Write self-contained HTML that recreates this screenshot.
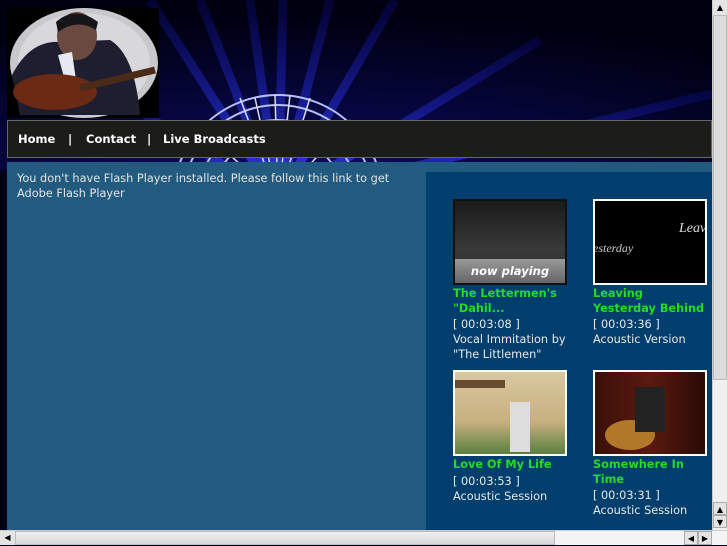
<!DOCTYPE html>
<html><head><meta charset="utf-8"><style>
*{margin:0;padding:0;box-sizing:border-box}
html,body{width:727px;height:545px;overflow:hidden;background:#000018;font-family:"DejaVu Sans","Liberation Sans",sans-serif}
.abs{position:absolute}
#nav{left:7px;top:120px;width:705px;height:38px;background:#1c1c1a;border:1px solid #666;color:#fff;font-weight:bold;font-size:11.5px;line-height:36px}
#nav span{position:absolute;top:0}
#content{left:7px;top:162px;width:705px;height:368px;background:#225a80}
#msg{left:17px;top:171px;width:400px;color:#e4e4e4;font-size:11.3px;line-height:15px}
#panel{left:426px;top:172px;width:286px;height:358px;background:#003f6d}
.item{position:absolute;width:130px;font-size:11.3px;line-height:15px;color:#e8e8e8}
.th{width:114px;height:86px;border:2px solid #fff;margin-bottom:2px;position:relative;overflow:hidden}
.t{color:#22dd22;font-weight:bold;font-size:11.3px;line-height:14.5px;margin-bottom:1px;white-space:nowrap}
</style></head><body>
<svg class="abs" style="left:0;top:0" width="727" height="170">
<defs>
<radialGradient id="bg" cx="0.4" cy="1" r="0.9"><stop offset="0" stop-color="#0a0a60"/><stop offset="1" stop-color="#000010"/></radialGradient>
<linearGradient id="bm" x1="0" y1="1" x2="0" y2="0"><stop offset="0" stop-color="#3a4aff"/><stop offset="1" stop-color="#1010a0" stop-opacity=".3"/></linearGradient>
</defs>
<rect width="727" height="170" fill="url(#bg)"/>
<g stroke="url(#bm)" stroke-width="9" opacity=".85">
<line x1="278" y1="200" x2="60" y2="60"/>
<line x1="278" y1="200" x2="150" y2="0"/>
<line x1="278" y1="200" x2="200" y2="0"/>
<line x1="278" y1="200" x2="250" y2="0"/>
<line x1="278" y1="200" x2="283" y2="0"/>
<line x1="278" y1="200" x2="330" y2="0"/>
<line x1="278" y1="200" x2="395" y2="0"/>
<line x1="278" y1="200" x2="540" y2="40"/>
<line x1="278" y1="200" x2="727" y2="90"/>
</g>
<g fill="none" stroke="#b8c0ff" stroke-width="2">
<circle cx="278" cy="200" r="105"/><circle cx="278" cy="200" r="95"/><circle cx="278" cy="200" r="80"/><circle cx="278" cy="200" r="65"/>
</g>
<g stroke="#d8dcff" stroke-width="1.5">
<line x1="278" y1="200" x2="240" y2="98"/><line x1="278" y1="200" x2="255" y2="98"/><line x1="278" y1="200" x2="275" y2="95"/><line x1="278" y1="200" x2="290" y2="95"/><line x1="278" y1="200" x2="310" y2="98"/><line x1="278" y1="200" x2="198" y2="125"/><line x1="278" y1="200" x2="350" y2="120"/>
</g>
<rect x="7" y="8" width="152" height="110" fill="#000"/>
<ellipse cx="84" cy="63" rx="74" ry="55" fill="#c8c8cc"/>
<ellipse cx="84" cy="63" rx="66" ry="50" fill="#d8d8dc"/>
<path d="M12 75 Q30 40 60 42 L110 40 Q135 55 140 115 L20 115 Z" fill="#1e1e30"/>
<ellipse cx="77" cy="36" rx="20" ry="24" fill="#6a4a40"/>
<path d="M56 22 Q75 5 98 22 L96 30 Q77 18 58 32Z" fill="#151518"/>
<path d="M58 55 L72 52 L76 80 L66 85Z" fill="#e8e8f0"/>
<ellipse cx="55" cy="92" rx="42" ry="18" fill="#6a2a14"/>
<line x1="80" y1="88" x2="155" y2="70" stroke="#4a2a18" stroke-width="7"/>
</svg>
<div id="nav" class="abs"><span style="left:10px">Home</span><span style="left:60px">|</span><span style="left:78px">Contact</span><span style="left:139px">|</span><span style="left:155px">Live Broadcasts</span></div>
<div id="content" class="abs"></div>
<div id="msg" class="abs">You don't have Flash Player installed. Please follow this link to get Adobe Flash Player</div>
<div id="panel" class="abs"></div>
<div class="item" style="left:453px;top:199px">
 <div class="th" style="border-color:#111;background:linear-gradient(#1a1a1a,#3a3a3a 60%,#2a2a2a)"><div style="position:absolute;left:0;right:0;bottom:0;height:24px;background:linear-gradient(#999,#666);color:#fff;font-style:italic;font-weight:bold;font-size:11.5px;text-align:center;line-height:24px">now playing</div></div>
 <div class="t">The Lettermen's<br>"Dahil...</div>[ 00:03:08 ]<br>Vocal Immitation by<br>"The Littlemen"
</div>
<div class="item" style="left:593px;top:199px">
 <div class="th" style="background:#000"><span style="position:absolute;left:84px;top:20px;color:#ddd;font-family:'Liberation Serif',serif;font-style:italic;font-size:14px">Leavin</span><span style="position:absolute;left:-2px;top:40px;color:#ccc;font-family:'Liberation Serif',serif;font-style:italic;font-size:12px">esterday</span></div>
 <div class="t">Leaving<br>Yesterday Behind</div>[ 00:03:36 ]<br>Acoustic Version
</div>
<div class="item" style="left:453px;top:370px">
 <div class="th" style="background:linear-gradient(#d8c8a0,#c8b080 60%,#5a8040)"><div style="position:absolute;left:0;top:8px;width:50px;height:8px;background:#6a4a30"></div><div style="position:absolute;left:55px;top:30px;width:20px;height:50px;background:#ddd"></div></div>
 <div class="t">Love Of My Life</div>[ 00:03:53 ]<br>Acoustic Session
</div>
<div class="item" style="left:593px;top:370px">
 <div class="th" style="background:linear-gradient(90deg,#3a1008,#5a1a10,#2a0a05)"><div style="position:absolute;left:10px;top:48px;width:50px;height:30px;border-radius:50%;background:#b07828"></div><div style="position:absolute;left:40px;top:15px;width:30px;height:45px;background:#222"></div></div>
 <div class="t">Somewhere In<br>Time</div>[ 00:03:31 ]<br>Acoustic Session
</div>
<div class="abs" style="left:712px;top:0;width:15px;height:530px;background:#f0f0f0;border-left:1px solid #ccc"></div>
<div class="abs" style="left:713px;top:15px;width:14px;height:365px;background:#dcdcdc;border:1px solid #bbb"></div>
<div class="abs" style="left:713px;top:0;width:14px;height:15px;font-size:8px;text-align:center;line-height:15px;background:#e4e4e4">▲</div>
<div class="abs" style="left:713px;top:502px;width:14px;height:13px;font-size:8px;text-align:center;line-height:13px;background:#e4e4e4;border:1px solid #aaa">▲</div>
<div class="abs" style="left:713px;top:515px;width:14px;height:13px;font-size:8px;text-align:center;line-height:13px;background:#e4e4e4;border:1px solid #aaa">▼</div>
<div class="abs" style="left:0;top:530px;width:727px;height:15px;background:#f4f4f4;border-top:1px solid #ccc"></div>
<div class="abs" style="left:15px;top:531px;width:540px;height:14px;background:linear-gradient(#f0f0f0,#d8d8d8);border:1px solid #bbb"></div>
<div class="abs" style="left:0;top:531px;width:15px;height:14px;font-size:8px;text-align:center;line-height:14px;background:#e4e4e4">◀</div>
<div class="abs" style="left:684px;top:531px;width:14px;height:14px;font-size:8px;text-align:center;line-height:14px;background:#e4e4e4;border:1px solid #aaa">◀</div>
<div class="abs" style="left:698px;top:531px;width:14px;height:14px;font-size:8px;text-align:center;line-height:14px;background:#e4e4e4;border:1px solid #aaa">▶</div>
</body></html>
